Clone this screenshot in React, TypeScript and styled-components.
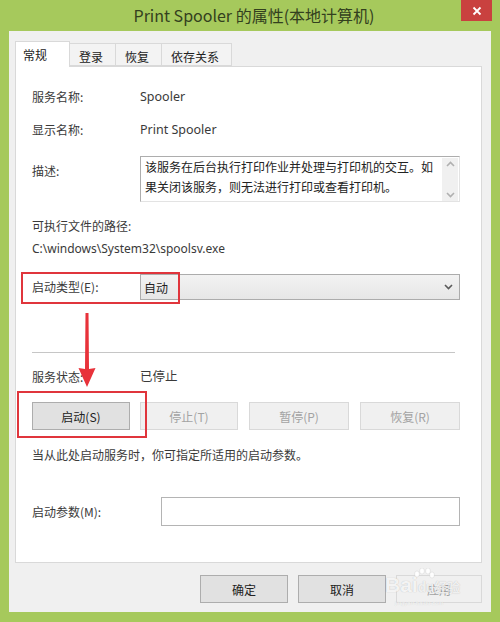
import React from 'react'
import styled, { createGlobalStyle } from 'styled-components'

const Global = createGlobalStyle`
	html, body {
		margin: 0;
		padding: 0;
		background: #a6c95c;
	}
	body {
		font-family: "Noto Sans", "Noto Sans CJK SC", sans-serif;
	}
`

const cjk = `"Noto Sans CJK SC", "Noto Sans", sans-serif`

const App: React.FC = () => {
	return (
		<>
			<Global />
			<Window>
				<TitleBar>
					<span />
					<Title>Print Spooler 的属性(本地计算机)</Title>
					<CloseButton>
						<svg width="10" height="10" viewBox="0 0 10 10">
							<path d="M1.5 1.5 L8.5 8.5 M8.5 1.5 L1.5 8.5" stroke="#fff" strokeWidth="1.8" />
						</svg>
					</CloseButton>
				</TitleBar>
				<Client>
					<Tabs>
						<Tab active>常规</Tab>
						<Tab>登录</Tab>
						<Tab>恢复</Tab>
						<Tab>依存关系</Tab>
					</Tabs>
					<Panel>
						<Row top={21}>
							<Label>服务名称:</Label>
							<Value>Spooler</Value>
						</Row>
						<Row top={15}>
							<Label>显示名称:</Label>
							<Value>Print Spooler</Value>
						</Row>
						<Row top={17} align="start">
							<Label style={{ paddingTop: 6 }}>描述:</Label>
							<DescBox>
								<DescText>
									该服务在后台执行打印作业并处理与打印机的交互。如果关闭该服务，则无法进行打印或查看打印机。
								</DescText>
								<ScrollBar>
									<Chevron up light />
									<Chevron light />
								</ScrollBar>
							</DescBox>
						</Row>
						<Line top={16}>可执行文件的路径:</Line>
						<Line top={4}>C:\windows\System32\spoolsv.exe</Line>
						<Row top={16}>
							<Label>启动类型(E):</Label>
							<Select>
								<SelectValue>自动</SelectValue>
								<Chevron />
							</Select>
						</Row>
						<Separator />
						<Row top={15}>
							<Label>服务状态:</Label>
							<Value>已停止</Value>
						</Row>
						<ButtonRow>
							<ActionButton>启动(S)</ActionButton>
							<ActionButton disabled>停止(T)</ActionButton>
							<ActionButton disabled wide>暂停(P)</ActionButton>
							<ActionButton disabled wide>恢复(R)</ActionButton>
						</ButtonRow>
						<Line top={17}>当从此处启动服务时，你可指定所适用的启动参数。</Line>
						<Row top={32}>
							<ParamLabel>启动参数(M):</ParamLabel>
							<ParamInput />
						</Row>

						<Highlight style={{ left: 5, top: 205, width: 159, height: 32 }} />
						<Highlight style={{ left: 1, top: 324, width: 130, height: 47 }} />
						<Arrow width="24" height="80" viewBox="0 0 24 80">
							<path d="M10.5 0 L13.5 0 L14 56 L20.5 55 L12 74 L3.5 55 L10 56 Z" fill="#e8323a" />
						</Arrow>
					</Panel>
					<Footer>
						<FooterButton>确定</FooterButton>
						<FooterButton>取消</FooterButton>
						<FooterButton disabled>
							应用
							<Watermark>
								<Paw>
									<svg width="22" height="14" viewBox="0 0 22 14">
										<g fill="rgba(255,255,255,0.9)" stroke="rgba(0,0,0,0.12)" strokeWidth="0.6">
											<ellipse cx="4" cy="6" rx="2.4" ry="3" />
											<ellipse cx="9" cy="3" rx="2.4" ry="3" />
											<ellipse cx="15" cy="3" rx="2.4" ry="3" />
											<ellipse cx="19" cy="7" rx="2.4" ry="3" />
										</g>
									</svg>
								</Paw>
								<Big>Bai</Big>
								<SmallMark>du经验</SmallMark>
								<Url>jingyan.baidu.com</Url>
							</Watermark>
						</FooterButton>
					</Footer>
				</Client>
			</Window>
		</>
	)
}

const Window = styled.div`
	width: 500px;
	height: 622px;
	box-sizing: border-box;
	background: #a6c95c;
	padding: 0 9px 10px 9px;
	display: flex;
	flex-direction: column;
	overflow: hidden;
`
const TitleBar = styled.div`
	height: 31px;
	display: grid;
	grid-template-columns: 1fr auto 1fr;
	align-items: start;
`
const Title = styled.div`
	font-family: ${cjk};
	font-size: 16px;
	line-height: 31px;
	color: #33401e;
	padding-left: 8px;
`
const CloseButton = styled.div`
	justify-self: end;
	width: 31px;
	height: 21px;
	margin-right: -1px;
	background: #c9413f;
	display: flex;
	align-items: center;
	justify-content: center;
`
const Client = styled.div`
	flex: 1;
	background: #f0f0f0;
	padding: 10px 9px 0 6px;
	display: flex;
	flex-direction: column;
`
const Tabs = styled.div`
	display: flex;
	align-items: flex-end;
	height: 25px;
	position: relative;
	z-index: 1;
`
const Tab = styled.div<{ active?: boolean }>`
	font-family: ${cjk};
	font-size: 12px;
	color: #222;
	box-sizing: border-box;
	height: ${(p) => (p.active ? 26 : 23)}px;
	margin-bottom: ${(p) => (p.active ? -1 : 0)}px;
	padding: ${(p) => (p.active ? '4px 22px 0 7px' : '4px 12px 0 9px')};
	background: ${(p) => (p.active ? '#fff' : '#f3f3f3')};
	border: 1px solid #d9d9d9;
	border-bottom: ${(p) => (p.active ? 'none' : '1px solid #d9d9d9')};
	& + & {
		margin-left: -1px;
	}
`
const Panel = styled.div`
	position: relative;
	height: 497px;
	box-sizing: border-box;
	background: #fff;
	border: 1px solid #d9d9d9;
	padding: 0 21px 0 16px;
	display: flex;
	flex-direction: column;
`
const Row = styled.div<{ top: number; align?: string }>`
	display: flex;
	align-items: ${(p) => (p.align === 'start' ? 'flex-start' : 'center')};
	margin-top: ${(p) => p.top}px;
`
const Label = styled.div`
	width: 108px;
	flex: none;
	font-family: ${cjk};
	font-size: 12px;
	line-height: 18px;
	color: #3a3a3a;
`
const ParamLabel = styled(Label)`
	width: 129px;
`
const Value = styled.div`
	font-family: "Noto Sans", "Noto Sans CJK SC", sans-serif;
	font-size: 12.5px;
	line-height: 18px;
	color: #3a3a3a;
`
const Line = styled.div<{ top: number }>`
	margin-top: ${(p) => p.top}px;
	font-family: "Noto Sans", "Noto Sans CJK SC", sans-serif;
	font-size: 12px;
	line-height: 18px;
	color: #3a3a3a;
`
const DescBox = styled.div`
	flex: 1;
	height: 46px;
	box-sizing: border-box;
	border: 1px solid #adadad;
	border-right-color: #e3e3e3;
	border-bottom-color: #e3e3e3;
	display: flex;
`
const DescText = styled.div`
	flex: 1;
	font-family: ${cjk};
	font-size: 12px;
	line-height: 20px;
	color: #222;
	padding: 0 0 0 4px;
`
const ScrollBar = styled.div`
	width: 16px;
	margin: 1px 1px 0 0;
	background: #f0f0f0;
	display: flex;
	flex-direction: column;
	justify-content: space-between;
	align-items: center;
	padding: 3px 0;
`
const Chevron: React.FC<{ up?: boolean; light?: boolean }> = ({ up, light }) => (
	<svg width="9" height="6" viewBox="0 0 9 6">
		<path
			d={up ? 'M1 5 L4.5 1.5 L8 5' : 'M1 1 L4.5 4.5 L8 1'}
			fill="none"
			stroke={light ? '#b0b0b0' : '#5a5a5a'}
			strokeWidth="1.6"
		/>
	</svg>
)
const Select = styled.div`
	flex: 1;
	height: 26px;
	box-sizing: border-box;
	border: 1px solid #acacac;
	background: linear-gradient(#f2f2f2, #e6e6e6);
	display: flex;
	align-items: center;
	justify-content: space-between;
	padding: 0 6px 0 3px;
`
const SelectValue = styled.div`
	font-family: ${cjk};
	font-size: 12px;
	color: #222;
`
const Separator = styled.div`
	margin-top: 52px;
	height: 1px;
	width: 423px;
	background: #c6c6c6;
`
const ButtonRow = styled.div`
	display: flex;
	gap: 10px;
	margin-top: 16px;
`
const ActionButton = styled.div<{ disabled?: boolean; wide?: boolean }>`
	width: ${(p) => (p.wide ? 100 : 98)}px;
	height: 28px;
	box-sizing: border-box;
	margin-left: ${(p) => (p.wide ? 1 : 0)}px;
	border: 1px solid ${(p) => (p.disabled ? '#d9d9d9' : '#adadad')};
	background: ${(p) => (p.disabled ? '#f0f0f0' : '#e1e1e1')};
	color: ${(p) => (p.disabled ? '#a3a3a3' : '#222')};
	font-family: ${cjk};
	font-size: 12px;
	display: flex;
	align-items: center;
	justify-content: center;
`
const ParamInput = styled.div`
	flex: 1;
	height: 29px;
	box-sizing: border-box;
	border: 1px solid #b4b4b4;
	background: #fff;
`
const Highlight = styled.div`
	position: absolute;
	border: 2px solid #e0353c;
	box-sizing: border-box;
`
const Arrow = styled.svg`
	position: absolute;
	left: 59px;
	top: 246px;
`
const Footer = styled.div`
	display: flex;
	justify-content: flex-end;
	gap: 10px;
	margin-top: 12px;
`
const FooterButton = styled.div<{ disabled?: boolean }>`
	position: relative;
	width: ${(p) => (p.disabled ? 86 : 88)}px;
	height: 28px;
	box-sizing: border-box;
	border: 1px solid ${(p) => (p.disabled ? '#d9d9d9' : '#adadad')};
	background: ${(p) => (p.disabled ? '#f0f0f0' : '#e1e1e1')};
	color: ${(p) => (p.disabled ? '#a3a3a3' : '#222')};
	font-family: ${cjk};
	font-size: 12px;
	display: flex;
	align-items: center;
	justify-content: center;
`
const Watermark = styled.div`
	position: absolute;
	left: -12px;
	top: -6px;
	width: 90px;
	height: 40px;
	display: flex;
	align-items: baseline;
	white-space: nowrap;
	pointer-events: none;
`
const Paw = styled.span`
	position: absolute;
	left: 28px;
	top: -2px;
`
const Big = styled.span`
	font-family: "Liberation Sans", sans-serif;
	font-size: 21px;
	line-height: 30px;
	font-weight: bold;
	color: rgba(255, 255, 255, 0.85);
	text-shadow: 0 0 1px rgba(0, 0, 0, 0.25);
`
const SmallMark = styled.span`
	font-family: ${cjk};
	font-size: 13px;
	font-weight: bold;
	color: rgba(255, 255, 255, 0.8);
	text-shadow: 0 0 1px rgba(0, 0, 0, 0.25);
`
const Url = styled.span`
	position: absolute;
	left: 10px;
	top: 30px;
	font-family: "Liberation Sans", sans-serif;
	font-size: 6px;
	color: rgba(255, 255, 255, 0.9);
	text-shadow: 0 0 1px rgba(0, 0, 0, 0.2);
`

export default App
